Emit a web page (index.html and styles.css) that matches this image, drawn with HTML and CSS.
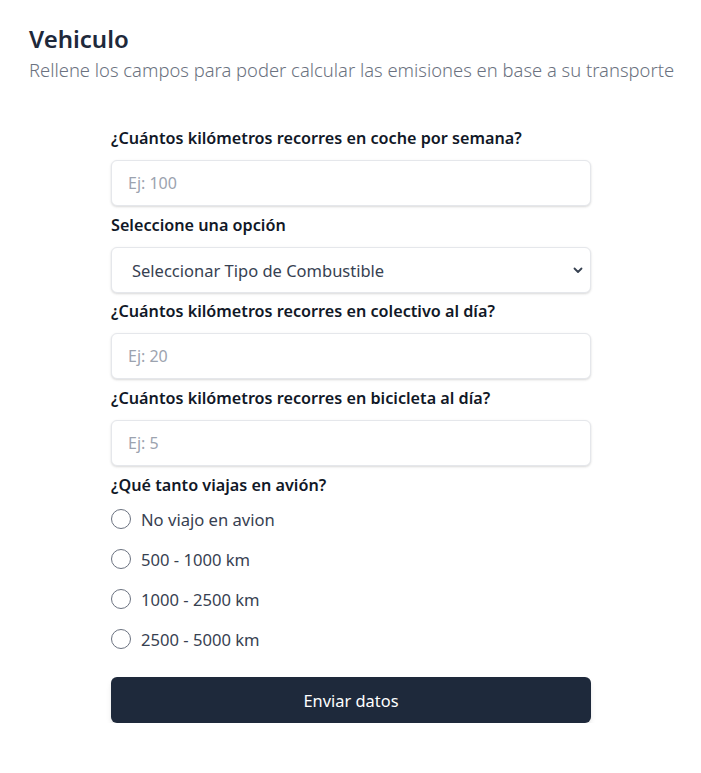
FILE: index.html
```html
<!DOCTYPE html>
<html lang="es">
<head>
<meta charset="utf-8">
<link rel="stylesheet" href="styles.css">
</head>
<body>
<header class="head">
  <h1 class="title">Vehiculo</h1>
  <p class="subtitle">Rellene los campos para poder calcular las emisiones en base a su transporte</p>
</header>
<form class="form">
  <label class="label">¿Cuántos kilómetros recorres en coche por semana?</label>
  <input class="field" type="text" placeholder="Ej: 100">
  <label class="label label-tight">Seleccione una opción</label>
  <div class="select-wrap">
    <select class="field select">
      <option>Seleccionar Tipo de Combustible</option>
    </select>
    <svg class="chev" viewBox="0 0 12 12" width="12" height="12"><path d="M2.5 4.5 L6 8 L9.5 4.5" fill="none" stroke="#374151" stroke-width="1.8" stroke-linecap="round" stroke-linejoin="round"/></svg>
  </div>
  <label class="label label-after-select">¿Cuántos kilómetros recorres en colectivo al día?</label>
  <input class="field" type="text" placeholder="Ej: 20">
  <label class="label label-tight">¿Cuántos kilómetros recorres en bicicleta al día?</label>
  <input class="field" type="text" placeholder="Ej: 5">
  <label class="label label-tight">¿Qué tanto viajas en avión?</label>
  <div class="radios">
    <label class="radio"><span class="dot"></span>No viajo en avion</label>
    <label class="radio"><span class="dot"></span>500 - 1000 km</label>
    <label class="radio"><span class="dot"></span>1000 - 2500 km</label>
    <label class="radio"><span class="dot"></span>2500 - 5000 km</label>
  </div>
  <button class="btn" type="button">Enviar datos</button>
</form>
</body>
</html>
```

FILE: styles.css
```css
* { box-sizing: border-box; }
body {
  margin: 0;
  background: #fff;
  font-family: "Noto Sans", "Open Sans", sans-serif;
  color: #111827;
}
.head {
  padding: 22px 29px 0;
}
.title {
  margin: 0;
  font-size: 24px;
  font-weight: 600;
  line-height: 34px;
  color: #1e293b;
}
.subtitle {
  margin: 0;
  font-size: 18.4px;
  font-weight: 300;
  line-height: 28px;
  color: #6b7280;
  white-space: nowrap;
}
.form {
  width: 480px;
  margin: 0 0 0 111px;
  padding-top: 43px;
  display: flex;
  flex-direction: column;
}
.label {
  font-size: 16.2px;
  font-weight: 600;
  line-height: 22px;
  color: #111827;
  margin-bottom: 11px;
}
.label-tight { margin-top: 8px; }
.label-after-select { margin-top: 7px; }
.field {
  height: 46px;
  width: 100%;
  border: 1px solid #e5e7eb;
  border-radius: 6px;
  box-shadow: 0 1px 3px rgba(0,0,0,0.10), 0 1px 2px rgba(0,0,0,0.06);
  background: #fff;
  padding: 0 16px;
  font-family: inherit;
  font-size: 16px;
  color: #374151;
  outline: none;
}
.field::placeholder { color: #9ca3af; }
.select-wrap { position: relative; }
.select {
  appearance: none;
  -webkit-appearance: none;
  padding-left: 20px;
  font-size: 16.5px;
  color: #374151;
}
.chev {
  position: absolute;
  right: 7px;
  top: 17px;
  pointer-events: none;
}
.radios {
  display: flex;
  flex-direction: column;
  margin-top: -8px;
}
.radio {
  display: flex;
  align-items: center;
  height: 40px;
  font-size: 16.6px;
  color: #374151;
}
.dot {
  width: 20px;
  height: 20px;
  border: 1.5px solid #6b7280;
  border-radius: 50%;
  margin-right: 10px;
  flex: none;
}
.btn {
  margin-top: 18px;
  height: 46px;
  width: 100%;
  border: none;
  border-radius: 6px;
  background: #1e293b;
  color: #fff;
  font-family: inherit;
  font-size: 16.4px;
  box-shadow: 0 4px 6px -1px rgba(0,0,0,0.10), 0 2px 4px -2px rgba(0,0,0,0.10);
}
```
